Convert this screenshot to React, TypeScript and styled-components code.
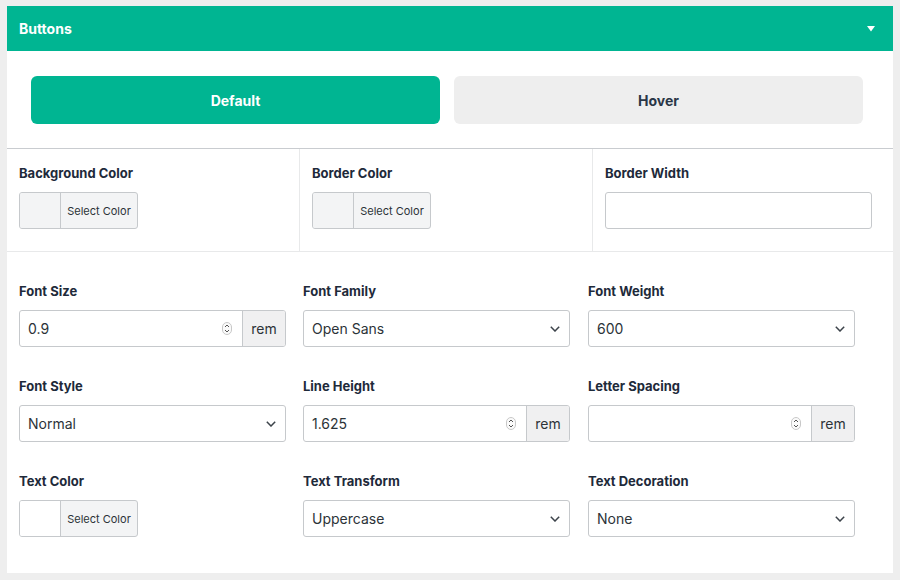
import React from "react";
import styled, { createGlobalStyle } from "styled-components";

const Global = createGlobalStyle`
  html, body { margin: 0; padding: 0; background: #eeeeee; }
  body { font-family: Inter, "Noto Sans", sans-serif; }
  * { box-sizing: border-box; }
`;

const Page = styled.div`
  padding: 6px 7px 0 7px;
  width: 900px;
  height: 580px;
`;

const Panel = styled.div`
  width: 886px;
  height: 567px;
  background: #ffffff;
  display: flex;
  flex-direction: column;
`;

const Header = styled.div`
  height: 45px;
  background: #00b592;
  color: #ffffff;
  display: flex;
  align-items: center;
  justify-content: space-between;
  padding: 0 18px 0 12px;
  font-size: 14px;
  font-weight: 700;
`;

const Tabs = styled.div`
  display: grid;
  grid-template-columns: 1fr 1fr;
  column-gap: 14px;
  padding: 25px 30px 24px 24px;
  border-bottom: 1px solid #c9ccd0;
`;

const Tab = styled.div<{ $active?: boolean }>`
  height: 48px;
  border-radius: 6px;
  display: flex;
  align-items: center;
  justify-content: center;
  font-size: 14px;
  font-weight: 700;
  background: ${(p) => (p.$active ? "#00b592" : "#eeeeee")};
  color: ${(p) => (p.$active ? "#ffffff" : "#2a3646")};
`;

const BorderRow = styled.div`
  display: grid;
  grid-template-columns: 293px 293px 1fr;
  border-bottom: 1px solid #e8e9ea;
`;

const BorderCell = styled.div<{ $divider?: boolean }>`
  padding: 16px 12px 22px 12px;
  border-right: ${(p) => (p.$divider ? "1px solid #e8e9ea" : "none")};
  display: flex;
  flex-direction: column;
  gap: 11px;
`;

const Grid = styled.div`
  display: grid;
  grid-template-columns: 284px 285px 267px;
  row-gap: 31px;
  padding: 31px 12px 0 12px;
`;

const Field = styled.div`
  display: flex;
  flex-direction: column;
  gap: 11px;
`;

const Label = styled.div`
  font-size: 13px;
  line-height: 16px;
  font-weight: 700;
  color: #1e2a3a;
`;

const Picker = styled.div`
  width: 119px;
  height: 37px;
  border: 1px solid #c6c9cc;
  border-radius: 3px;
  display: flex;
  overflow: hidden;
  background: #f3f4f5;
`;

const Swatch = styled.div<{ $color: string }>`
  width: 41px;
  background: ${(p) => p.$color};
  border-right: 1px solid #c6c9cc;
`;

const PickerText = styled.div`
  flex: 1;
  display: flex;
  align-items: center;
  justify-content: center;
  font-size: 11px;
  color: #2c3338;
`;

const Box = styled.div`
  width: 267px;
  height: 37px;
  border: 1px solid #c6c9cc;
  border-radius: 3px;
  background: #ffffff;
  display: flex;
  align-items: center;
  overflow: hidden;
  font-size: 14px;
  color: #2c3338;
`;

const BoxText = styled.div`
  flex: 1;
  padding-left: 8px;
  white-space: nowrap;
`;

const Spinner = styled.div`
  width: 10px;
  height: 13px;
  margin-right: 10px;
  display: flex;
`;

const Addon = styled.div`
  width: 43px;
  height: 100%;
  background: #f0f0f1;
  border-left: 1px solid #c6c9cc;
  display: flex;
  align-items: center;
  justify-content: center;
  font-size: 14px;
  color: #2c3338;
`;

const Chevron = styled.div`
  width: 10px;
  height: 6px;
  margin-right: 9px;
  display: flex;
`;

const SpinIcon = () => (
  <Spinner>
    <svg width="10" height="13" viewBox="0 0 10 13">
      <rect x="0.5" y="0.5" width="9" height="12" rx="4.5" fill="#fafafa" stroke="#c8c8c8" />
      <polyline points="3,5 5,3 7,5" fill="none" stroke="#555" strokeWidth="1" />
      <polyline points="3,8 5,10 7,8" fill="none" stroke="#555" strokeWidth="1" />
    </svg>
  </Spinner>
);

const ChevronIcon = () => (
  <Chevron>
    <svg width="10" height="6" viewBox="0 0 10 6">
      <polyline points="0.8,0.8 5,5 9.2,0.8" fill="none" stroke="#3c434a" strokeWidth="1.5" />
    </svg>
  </Chevron>
);

const ColorPicker = ({ color }: { color: string }) => (
  <Picker>
    <Swatch $color={color} />
    <PickerText>Select Color</PickerText>
  </Picker>
);

const NumberInput = ({ value }: { value: string }) => (
  <Box>
    <BoxText>{value}</BoxText>
    <SpinIcon />
    <Addon>rem</Addon>
  </Box>
);

const Select = ({ value }: { value: string }) => (
  <Box>
    <BoxText>{value}</BoxText>
    <ChevronIcon />
  </Box>
);

export default function App() {
  return (
    <>
      <Global />
      <Page>
        <Panel>
          <Header>
            <span>Buttons</span>
            <svg width="8" height="6" viewBox="0 0 8 6">
              <polygon points="0,0 8,0 4,5.5" fill="#ffffff" />
            </svg>
          </Header>
          <Tabs>
            <Tab $active>Default</Tab>
            <Tab>Hover</Tab>
          </Tabs>
          <BorderRow>
            <BorderCell $divider>
              <Label>Background Color</Label>
              <ColorPicker color="#f3f4f5" />
            </BorderCell>
            <BorderCell $divider>
              <Label>Border Color</Label>
              <ColorPicker color="#f3f4f5" />
            </BorderCell>
            <BorderCell>
              <Label>Border Width</Label>
              <Box />
            </BorderCell>
          </BorderRow>
          <Grid>
            <Field>
              <Label>Font Size</Label>
              <NumberInput value="0.9" />
            </Field>
            <Field>
              <Label>Font Family</Label>
              <Select value="Open Sans" />
            </Field>
            <Field>
              <Label>Font Weight</Label>
              <Select value="600" />
            </Field>
            <Field>
              <Label>Font Style</Label>
              <Select value="Normal" />
            </Field>
            <Field>
              <Label>Line Height</Label>
              <NumberInput value="1.625" />
            </Field>
            <Field>
              <Label>Letter Spacing</Label>
              <NumberInput value="" />
            </Field>
            <Field>
              <Label>Text Color</Label>
              <ColorPicker color="#ffffff" />
            </Field>
            <Field>
              <Label>Text Transform</Label>
              <Select value="Uppercase" />
            </Field>
            <Field>
              <Label>Text Decoration</Label>
              <Select value="None" />
            </Field>
          </Grid>
        </Panel>
      </Page>
    </>
  );
}
